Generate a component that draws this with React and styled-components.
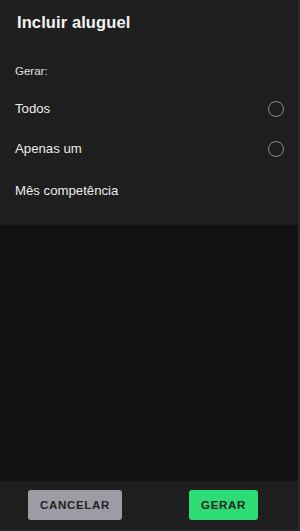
import React from 'react';
import styled, {createGlobalStyle} from 'styled-components';

const Global = createGlobalStyle`
  html, body {
    margin: 0;
    padding: 0;
    background: #121212;
  }
  body {
    font-family: "Liberation Sans", Arial, sans-serif;
  }
`;

const Screen = styled.div`
  width: 300px;
  height: 531px;
  display: flex;
  flex-direction: column;
  background: #121212;
  box-sizing: border-box;
  border-right: 2px solid #2a2a2a;
`;

const Header = styled.div`
  height: 45px;
  flex-shrink: 0;
  display: flex;
  align-items: center;
  padding: 1px 0 0 17px;
  background: #1f1f1f;
  border-bottom: 1px solid #191919;
  box-sizing: border-box;
`;

const Title = styled.h1`
  margin: 0;
  font-size: 16.5px;
  font-weight: 700;
  color: #f2f2f2;
  letter-spacing: 0.1px;
`;

const Body = styled.div`
  background: #1e1e1e;
  padding: 0 0 15px 15px;
`;

const Label = styled.div`
  font-size: 11.5px;
  color: #e0e0e0;
  padding: 20px 0 12px;
`;

const Row = styled.div`
  height: ${p => (p.$last ? 41 : 40)}px;
  box-sizing: border-box;
  display: flex;
  align-items: center;
  justify-content: space-between;
  padding-right: 14px;
  padding-top: ${p => (p.$last ? 2 : 0)}px;
  border-bottom: ${p => (p.$last ? 'none' : '1px solid #242424')};
  font-size: 13.2px;
  color: #ececec;
`;

const Radio = styled.span`
  width: 14px;
  height: 14px;
  border-radius: 50%;
  border: 1.5px solid #8a8a8a;
`;

const Empty = styled.div`
  flex: 1;
  background: #121212;
`;

const Footer = styled.div`
  height: 50px;
  flex-shrink: 0;
  display: flex;
  align-items: center;
  justify-content: space-between;
  padding: 0 40px 0 28px;
  background: #1f1f1f;
  border-bottom: 2px solid #262626;
  box-sizing: border-box;
`;

const Button = styled.button`
  height: 30px;
  width: ${p => p.$w}px;
  border: none;
  border-radius: 3px;
  background: ${p => p.$bg};
  color: #232323;
  font-family: "Liberation Sans", Arial, sans-serif;
  font-size: 11.5px;
  font-weight: 700;
  letter-spacing: 0.7px;
  padding: 0;
`;

export default function App() {
  return (
    <>
      <Global />
      <Screen>
        <Header>
          <Title>Incluir aluguel</Title>
        </Header>
        <Body>
          <Label>Gerar:</Label>
          <Row>
            Todos
            <Radio />
          </Row>
          <Row>
            Apenas um
            <Radio />
          </Row>
          <Row $last>Mês competência</Row>
        </Body>
        <Empty />
        <Footer>
          <Button $w={94} $bg="#9b9ca4">CANCELAR</Button>
          <Button $w={69} $bg="#2edc76">GERAR</Button>
        </Footer>
      </Screen>
    </>
  );
}
